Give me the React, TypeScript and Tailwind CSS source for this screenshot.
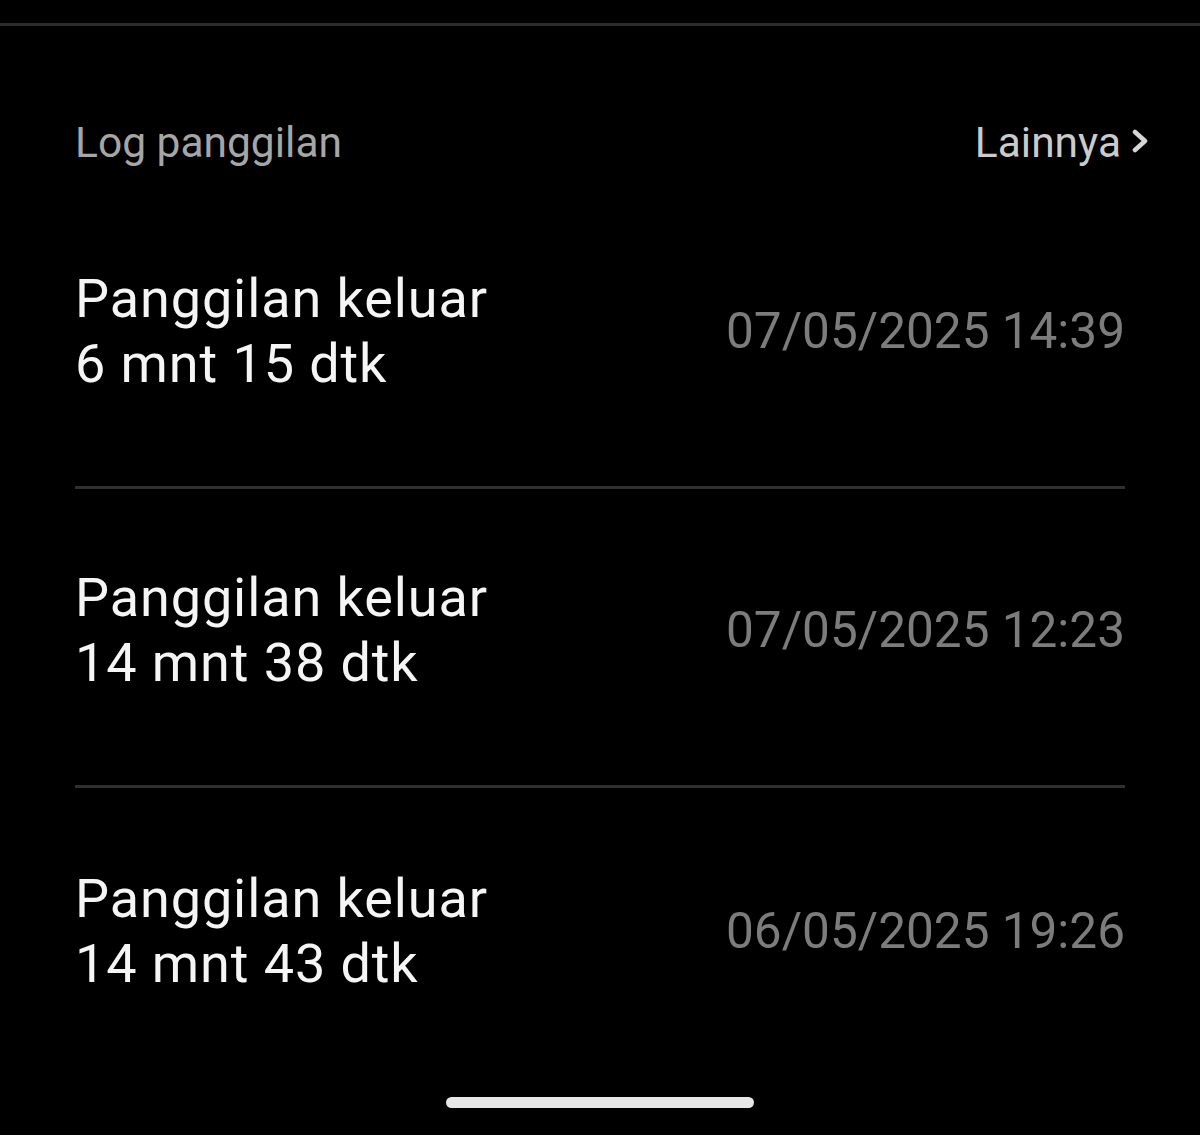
import React from "react";

const rows = [
  { title: "Panggilan keluar", dur: "6 mnt 15 dtk", date: "07/05/2025 14:39" },
  { title: "Panggilan keluar", dur: "14 mnt 38 dtk", date: "07/05/2025 12:23" },
  { title: "Panggilan keluar", dur: "14 mnt 43 dtk", date: "06/05/2025 19:26" },
];

export default function App() {
  return (
    <div
      className="w-[1200px] h-[1135px] bg-black flex flex-col overflow-hidden"
      style={{ fontFamily: "Roboto, 'Noto Sans', sans-serif" }}
    >
      <div className="mt-[23px] h-[3px] bg-[#2c2c2c]" />
      <div className="mt-[93px] flex items-center justify-between pl-[75px] pr-[51px] h-[48px]">
        <span className="text-[42.5px] leading-[48px] text-[#a6a6a6]">Log panggilan</span>
        <span className="flex items-center gap-[11px] text-[42.5px] leading-[48px] text-[#cbcbcb]">
          Lainnya
          <svg width="17" height="24" viewBox="0 0 17 24" className="mt-[-4px]">
            <polyline points="3,3 13,12 3,21" fill="none" stroke="#d6d6d6" strokeWidth="4.5" strokeLinecap="round" strokeLinejoin="round" />
          </svg>
        </span>
      </div>
      <div className="mt-[23px] mx-[75px] flex flex-col">
        {rows.map((r, i) => (
          <div
            key={i}
            className={
              "h-[299px] pb-[14px] flex items-center justify-between " +
              (i < rows.length - 1 ? "border-b-[3px] border-[#303030]" : "")
            }
          >
            <div className="flex flex-col text-[54px] leading-[65px] tracking-[0.9px] text-[#f5f5f5]">
              <span>{r.title}</span>
              <span>{r.dur}</span>
            </div>
            <span className="text-[49.5px] leading-[60px] text-[#7c7c7c]">{r.date}</span>
          </div>
        ))}
      </div>
      <div className="mt-[10px] mx-auto w-[308px] h-[11px] rounded-full bg-[#e6e6e6]" />
    </div>
  );
}
